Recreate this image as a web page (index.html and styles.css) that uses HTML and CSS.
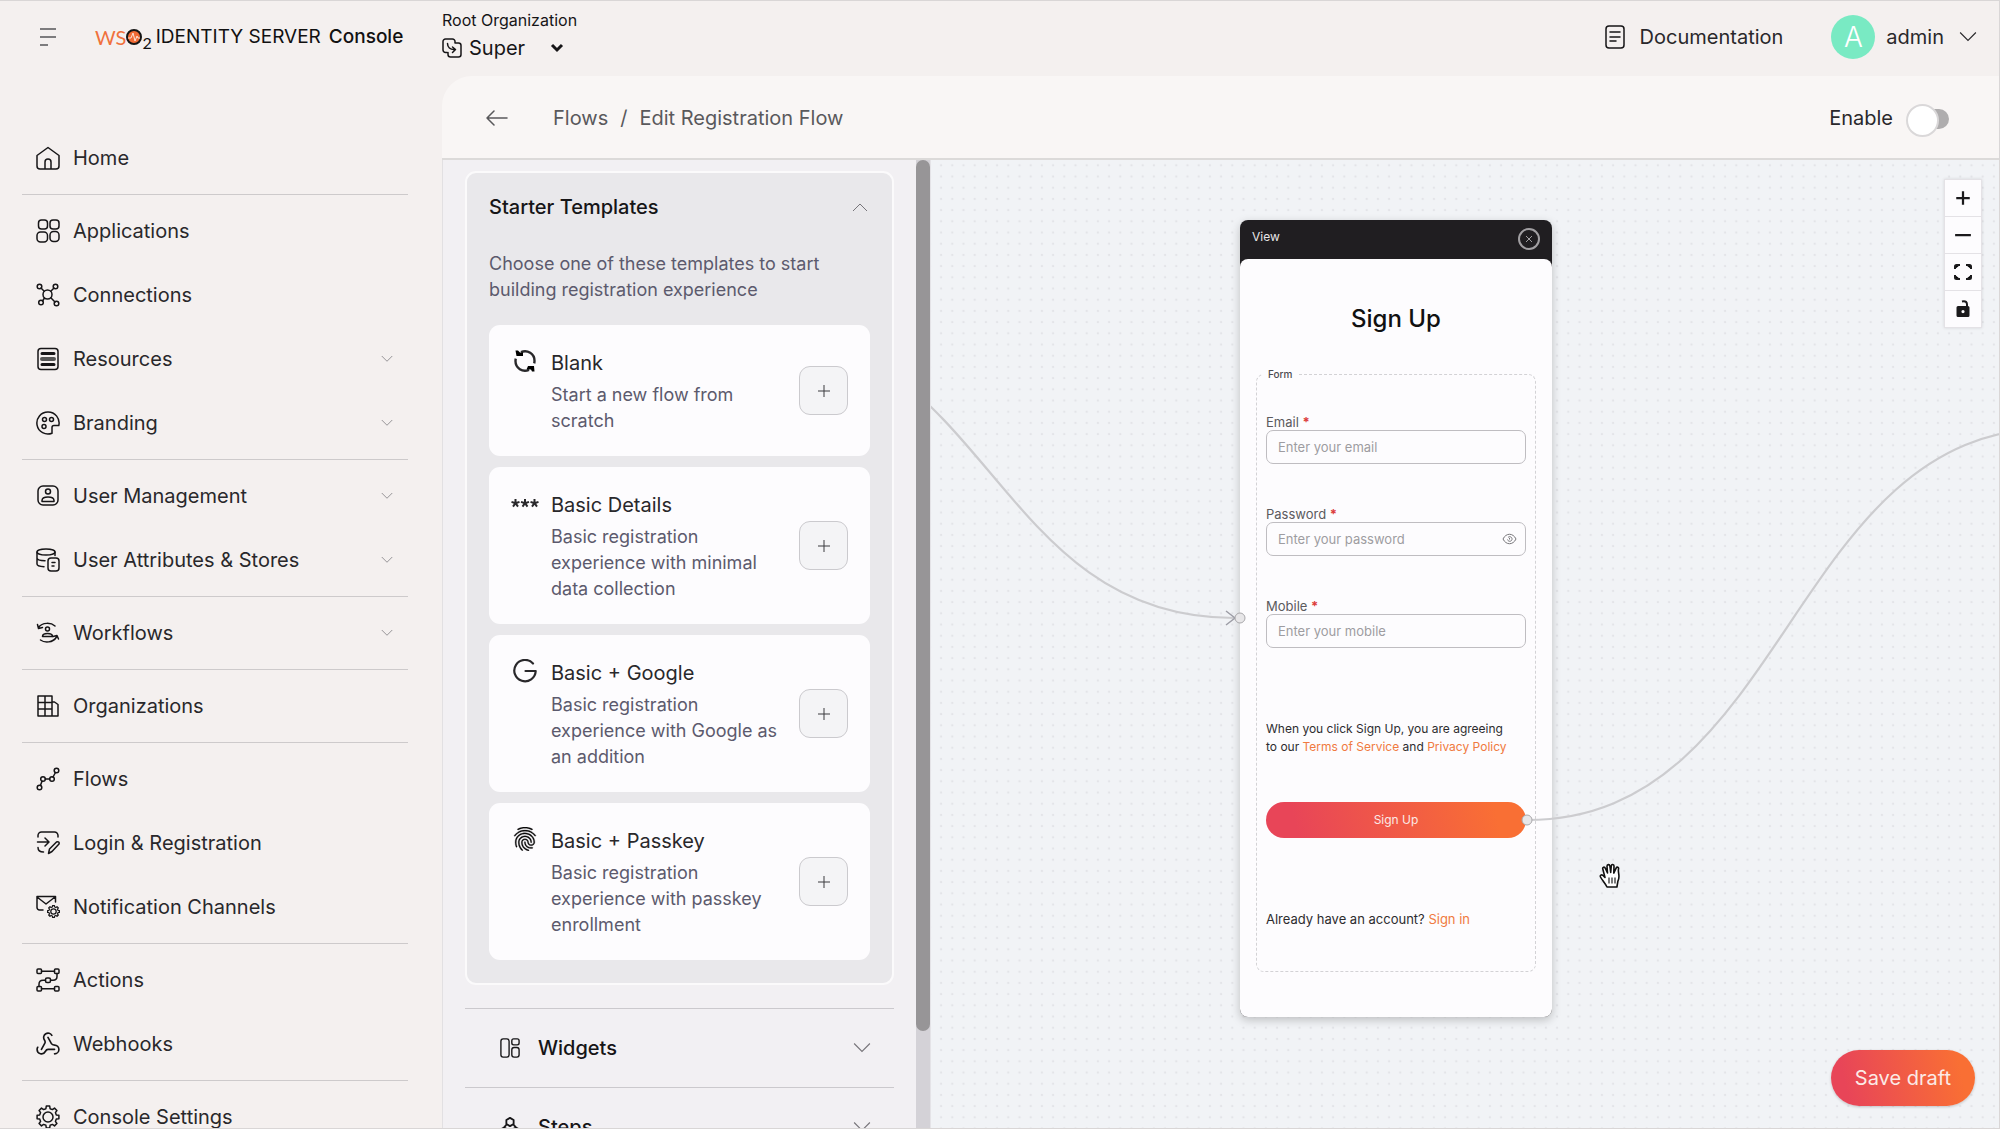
FILE: index.html
```
<!DOCTYPE html>
<html lang="en">
<head>
<meta charset="utf-8">
<meta name="viewport" content="width=device-width, initial-scale=1">
<title>Edit Registration Flow - Console</title>
<link rel="stylesheet" href="styles.css">
</head>
<body>
<svg class="sprite" aria-hidden="true">
  <symbol id="i-chevron" viewBox="0 0 16 16"><path d="M1 4l7 7 7-7"/></symbol>
  <symbol id="i-plus" viewBox="0 0 16 16"><path d="M8 2v12M2 8h12"/></symbol>
  <symbol id="i-gear" viewBox="0 0 24 24"><path d="M22.9 10.3V13.7L20.3 14.1 19.4 16.4 20.9 18.5 18.5 20.9 16.4 19.4 14.1 20.3 13.7 22.9H10.3L9.9 20.3 7.6 19.4 5.5 20.9 3.1 18.5 4.6 16.4 3.7 14.1 1.1 13.7V10.3L3.7 9.9 4.6 7.6 3.1 5.5 5.5 3.1 7.6 4.6 9.9 3.7 10.3 1.1H13.7L14.1 3.7 16.4 4.6 18.5 3.1 20.9 5.5 19.4 7.6 20.3 9.9Z"/><circle cx="12" cy="12" r="5"/></symbol>
</svg>

<header class="topbar">
  <div class="brand">
    <button class="icon-button menu-toggle" aria-label="Toggle menu">
      <svg width="18" height="18" viewBox="0 0 18 18"><path d="M1 1h16M1 9h16M1 17h8"/></svg>
    </button>
    <a class="logo" href="#">
      <span class="logo-ws">WS</span>
      <svg class="logo-o" width="16" height="16" viewBox="0 0 16 16"><circle cx="8" cy="8" r="7" fill="#f26b35" stroke="#151515" stroke-width="2"/><path d="M2 9h3l2-5 2 8 2-5 1 2h2" fill="none" stroke="#fbe3d8"/></svg>
      <span class="logo-two">2</span>
      <span class="logo-product">IDENTITY SERVER</span>
      <span class="logo-app">Console</span>
    </a>
  </div>
  <div class="org">
    <span class="org-label">Root Organization</span>
    <button class="org-switch">
      <svg class="line" width="20" height="20" viewBox="0 0 20 20"><path d="M5 14.500H3.500a2.500 2.500 0 0 1-2.500-2.500V3.500A2.500 2.500 0 0 1 3.500 1h7A2.500 2.500 0 0 1 13 3.500V5h3.500A2.500 2.500 0 0 1 19 7.500v9a2.500 2.500 0 0 1-2.500 2.500h-8A2.500 2.500 0 0 1 6 16.500v-2M5.500 5.500C5.500 9 8 12 13 11.500M10.500 9l3 2.500-3 3"/></svg>
      <span class="org-name">Super</span>
      <svg class="caret" width="14" height="10" viewBox="0 0 14 10"><path d="M2 2l5 5 5-5"/></svg>
    </button>
  </div>
  <div class="account">
    <a class="docs" href="#">
      <svg class="line" width="22" height="24" viewBox="0 0 22 24"><rect x="2" y="1" width="18" height="22" rx="3"/><path d="M6 7h10M6 12h10M6 16h6"/></svg>
      Documentation
    </a>
    <button class="user">
      <span class="avatar">A</span>
      <span>admin</span>
      <svg class="chevron" width="18" height="18"><use href="#i-chevron"/></svg>
    </button>
  </div>
</header>

<div class="shell">
  <nav class="sidebar" aria-label="Main">
    <ul>
      <li><a href="#"><svg class="line" viewBox="0 0 24 24"><path d="M1 9.500 12 1.500l11 8V20a3 3 0 0 1-3 3H4a3 3 0 0 1-3-3ZM9 23v-7a3 3 0 0 1 6 0v7"/></svg><span>Home</span></a></li>
    </ul>
    <ul>
      <li><a href="#"><svg class="line" viewBox="0 0 24 24"><rect x="2.500" y="1" width="9" height="9" rx="3"/><rect x="14" y="1" width="9" height="9" rx="3"/><rect x="1" y="13" width="10.500" height="10" rx="3.500"/><rect x="14" y="12.500" width="9" height="10" rx="3.500"/></svg><span>Applications</span></a></li>
      <li><a href="#"><svg class="line" viewBox="0 0 24 24"><circle cx="11.500" cy="11.500" r="4.500"/><circle cx="3.500" cy="3.500" r="2.300"/><circle cx="19.500" cy="3.500" r="2.300"/><circle cx="5" cy="19.500" r="2.300"/><circle cx="20.500" cy="20.500" r="2.300"/><path d="M5 5l3.200 3.200M18 5l-3.200 3.200M6.500 18l2-3M19 19l-4.200-4.200"/></svg><span>Connections</span></a></li>
      <li><a href="#"><svg class="line" viewBox="0 0 24 24"><rect x="2" y="1.500" width="20" height="21" rx="3"/><path d="M6 6.500h12M6 17.500h12" stroke-width="3"/><path d="M6 12h12" stroke-width="4" stroke="#555"/></svg><span>Resources</span><svg class="chevron" viewBox="0 0 16 16"><use href="#i-chevron"/></svg></a></li>
      <li><a href="#"><svg class="line" viewBox="0 0 24 24"><path d="M12 1a11 11 0 1 0 4 21.200v-5.700a2 2 0 0 1 2-2h4.800A11 11 0 0 0 12 1Z"/><circle cx="8.500" cy="8.500" r="2"/><circle cx="15.500" cy="8.500" r="2"/><circle cx="8" cy="15.500" r="2"/></svg><span>Branding</span><svg class="chevron" viewBox="0 0 16 16"><use href="#i-chevron"/></svg></a></li>
    </ul>
    <ul>
      <li><a href="#"><svg class="line" viewBox="0 0 24 24"><rect x="2" y="2" width="20" height="19" rx="5"/><circle cx="12" cy="7.500" r="2.500"/><path d="M6 17.500v-1c0-2 2.500-3.500 6-3.500s6 1.500 6 3.500v1Z"/></svg><span>User Management</span><svg class="chevron" viewBox="0 0 16 16"><use href="#i-chevron"/></svg></a></li>
      <li><a href="#"><svg class="line" viewBox="0 0 24 24"><ellipse cx="10" cy="4" rx="9" ry="3"/><path d="M1 4v12c0 1.500 3 2.500 7 2.700M19 4v3.500M1 10c0 1.500 3 2.700 8 2.700"/><rect x="12" y="10" width="11" height="13" rx="3"/><path d="M16 14.500h3M16 18h2"/></svg><span>User Attributes &amp; Stores</span><svg class="chevron" viewBox="0 0 16 16"><use href="#i-chevron"/></svg></a></li>
    </ul>
    <ul>
      <li><a href="#"><svg class="line" viewBox="0 0 24 24"><path d="M19 5C15 1.500 6.500 1 2.500 6.500M1.500 3.500l1 4 4-1M4.500 19c4 3 12.500 3 16-3M17 15.500l4-1 1.500 3.500"/><circle cx="11.500" cy="8" r="2"/><path d="M6.500 15.500c0-2 2-3 5-3s5 1 5 3Z"/></svg><span>Workflows</span><svg class="chevron" viewBox="0 0 16 16"><use href="#i-chevron"/></svg></a></li>
    </ul>
    <ul>
      <li><a href="#"><svg class="line" viewBox="0 0 24 24"><path d="M2 2h14v20H2ZM9 2v20M2 8.500h14M2 15h14M16 8h2.500L22 10.500V22h-6"/></svg><span>Organizations</span></a></li>
    </ul>
    <ul>
      <li><a href="#"><svg class="line" viewBox="0 0 24 24"><circle cx="3.500" cy="20.500" r="2.300"/><circle cx="7" cy="12" r="2.300"/><circle cx="16" cy="12" r="2.300"/><circle cx="20.500" cy="3.500" r="2.300"/><path d="M4.500 18.300 6 14.200M9.300 12h4.400M17 10l2.500-4.500"/></svg><span>Flows</span></a></li>
      <li><a href="#"><svg class="line" viewBox="0 0 24 24"><path d="M2 6V4.500A3.500 3.500 0 0 1 5.500 1h13A3.500 3.500 0 0 1 22 4.500V6M2 16.500C2 19.500 4 21 7.500 21M1.500 11h11M9 7l4 4-4 4M12.500 22.500l1-4.500 7-7c2-1 3 .5 2.500 2l-7 7.500Z"/></svg><span>Login &amp; Registration</span></a></li>
      <li><a href="#"><svg class="line" viewBox="0 0 24 24"><path d="M7 15H3.500A2.500 2.500 0 0 1 1 12.500V1.500h18.500V7M1 2l9 7 9-7"/><svg x="11" y="10" width="13" height="13" viewBox="0 0 24 24" stroke-width="2.300"><use href="#i-gear"/></svg></svg><span>Notification Channels</span></a></li>
    </ul>
    <ul>
      <li><a href="#"><svg class="line" viewBox="0 0 24 24"><rect x="1" y="1" width="4.500" height="4.500" rx="1"/><rect x="18.500" y="1" width="4.500" height="4.500" rx="1"/><rect x="9.500" y="10" width="5" height="4.500" rx="1.500"/><rect x="1" y="18.500" width="4.500" height="4.500" rx="1"/><rect x="18.500" y="18.500" width="4.500" height="4.500" rx="1"/><path d="M5.500 3.200h13M21 5.500v3c0 2.500-2 3.700-4 3.700h-2.500M9.500 12.200H7c-2.500 0-4 1.500-4 4v2.300M5.500 20.700h13"/></svg><span>Actions</span></a></li>
      <li><a href="#"><svg class="line" viewBox="1 1 22 22"><path d="M18 16.980h-5.990c-1.100 0-1.950.94-2.480 1.900A4 4 0 0 1 2 17c.01-.7.2-1.400.57-2M6 17l3.130-5.780c.53-.97.1-2.180-.5-3.100a4 4 0 1 1 6.890-4.060M12 6l3.130 5.730C15.660 12.700 16.900 13 18 13a4 4 0 0 1 0 8"/></svg><span>Webhooks</span></a></li>
    </ul>
    <ul>
      <li><a href="#"><svg class="line" viewBox="0 0 24 24"><use href="#i-gear"/></svg><span>Console Settings</span></a></li>
    </ul>
  </nav>

  <main class="workspace">
    <div class="page-header">
      <button class="icon-button back" aria-label="Go back">
        <svg class="line" width="22" height="16" viewBox="0 0 22 16"><path d="M21 8H1M8 1 1 8l7 7"/></svg>
      </button>
      <nav class="crumbs" aria-label="Breadcrumb"><a href="#">Flows</a><span>/</span><span>Edit Registration Flow</span></nav>
      <label class="enable">Enable <input type="checkbox" role="switch"></label>
    </div>

    <div class="builder">
      <aside class="panel">
        <div class="panel-content">
          <section class="templates">
            <button class="section-toggle">Starter Templates <svg class="chevron up" width="16" height="16"><use href="#i-chevron"/></svg></button>
            <p class="intro">Choose one of these templates to start<br>building registration experience</p>
            <ul class="cards">
              <li class="card">
                <svg class="card-icon" viewBox="0 0 24 24"><path d="M8 3.200A9.500 9.500 0 0 1 21.500 12c0 1-.1 1.600-.3 2.400M16 20.800A9.500 9.500 0 0 1 2.500 12c0-1 .1-1.600.3-2.400" fill="none" stroke="currentColor" stroke-width="2.400"/><path d="M2.500 1.500h2.500l2 2h3v3.500H3.500ZM21.500 22.500H19l-1-2h-4.500L15 17h6Z"/></svg>
                <div class="card-text"><h3>Blank</h3><p>Start a new flow from<br>scratch</p></div>
                <button class="add" aria-label="Add Blank"><svg width="16" height="16"><use href="#i-plus"/></svg></button>
              </li>
              <li class="card">
                <svg class="card-icon wide" viewBox="0 0 28 24"><path d="M4.500 12.200V8M4.500 12.200l-4-1.300M4.500 12.200l4-1.300M4.500 12.200 2 15.600M4.500 12.200 7 15.600M14 12.200V8M14 12.200l-4-1.300M14 12.200l4-1.300M14 12.200l-2.500 3.400M14 12.200l2.500 3.400M23.500 12.200V8M23.500 12.200l-4-1.300M23.500 12.200l4-1.300M23.500 12.200 21 15.600M23.500 12.200l2.500 3.400" stroke="currentColor" stroke-width="2"/></svg>
                <div class="card-text"><h3>Basic Details</h3><p>Basic registration<br>experience with minimal<br>data collection</p></div>
                <button class="add" aria-label="Add Basic Details"><svg width="16" height="16"><use href="#i-plus"/></svg></button>
              </li>
              <li class="card">
                <svg class="card-icon" viewBox="0 0 24 24"><path d="M20 4.500A10.700 10.700 0 1 0 22.700 12H12.500" fill="none" stroke="currentColor" stroke-width="2.200" stroke-linecap="round" stroke-linejoin="round"/></svg>
                <div class="card-text"><h3>Basic + Google</h3><p>Basic registration<br>experience with Google as<br>an addition</p></div>
                <button class="add" aria-label="Add Basic + Google"><svg width="16" height="16"><use href="#i-plus"/></svg></button>
              </li>
              <li class="card">
                <svg class="card-icon wide" viewBox="2 2 20 20" stroke="currentColor" stroke-width=".3"><path d="M17.810 4.470c-.08 0-.16-.02-.23-.06C15.660 3.420 14 3 12.010 3c-1.980 0-3.860.47-5.570 1.410-.24.13-.54.04-.68-.2-.13-.24-.04-.55.2-.68C7.820 2.520 9.860 2 12.010 2c2.130 0 3.990.47 6.030 1.520.25.13.34.43.21.67-.09.18-.26.28-.44.28zM3.500 9.720c-.1 0-.2-.03-.29-.09-.23-.16-.28-.47-.12-.7.99-1.400 2.250-2.500 3.750-3.270C9.980 4.040 14 4.030 17.150 5.650c1.500.77 2.760 1.860 3.750 3.250.16.22.11.54-.12.7-.23.16-.54.11-.7-.12-.9-1.260-2.040-2.250-3.390-2.940-2.870-1.470-6.540-1.470-9.400.01-1.360.7-2.500 1.700-3.400 2.960-.08.14-.23.21-.39.21zm6.250 12.070c-.13 0-.26-.05-.35-.15-.87-.87-1.340-1.430-2.010-2.640-.69-1.230-1.050-2.730-1.050-4.340 0-2.970 2.540-5.390 5.660-5.390s5.660 2.420 5.660 5.390c0 .28-.22.5-.5.5s-.5-.22-.5-.5c0-2.420-2.090-4.390-4.660-4.390-2.570 0-4.660 1.970-4.660 4.390 0 1.440.32 2.770.93 3.850.64 1.150 1.080 1.640 1.850 2.420.19.2.19.51 0 .71-.11.1-.24.15-.37.15zm7.170-1.850c-1.190 0-2.240-.3-3.100-.89-1.490-1.010-2.380-2.650-2.380-4.390 0-.28.22-.5.5-.5s.5.22.5.5c0 1.410.72 2.740 1.940 3.560.71.48 1.540.71 2.540.71.24 0 .64-.03 1.040-.1.27-.05.53.13.58.41.05.27-.13.53-.41.58-.57.11-1.070.12-1.210.12zM14.910 22c-.04 0-.09-.01-.13-.02-1.590-.44-2.630-1.030-3.720-2.100-1.400-1.390-2.170-3.240-2.170-5.220 0-1.620 1.380-2.940 3.080-2.940 1.700 0 3.080 1.320 3.080 2.940 0 1.070.93 1.940 2.080 1.940s2.080-.87 2.080-1.940c0-3.770-3.250-6.830-7.250-6.830-2.840 0-5.440 1.580-6.610 4.030-.39.81-.59 1.760-.59 2.800 0 .78.07 2.010.67 3.610.1.26-.03.55-.29.64-.26.1-.55-.04-.64-.29-.49-1.310-.73-2.610-.73-3.960 0-1.200.23-2.290.68-3.240 1.330-2.790 4.280-4.600 7.510-4.600 4.550 0 8.250 3.510 8.250 7.830 0 1.620-1.380 2.940-3.080 2.940s-3.080-1.320-3.080-2.940c0-1.070-.93-1.940-2.080-1.940s-2.080.87-2.080 1.940c0 1.710.66 3.310 1.870 4.510.95.94 1.860 1.460 3.270 1.850.27.07.42.35.35.61-.05.23-.26.38-.47.38z"/></svg>
                <div class="card-text"><h3>Basic + Passkey</h3><p>Basic registration<br>experience with passkey<br>enrollment</p></div>
                <button class="add" aria-label="Add Basic + Passkey"><svg width="16" height="16"><use href="#i-plus"/></svg></button>
              </li>
            </ul>
          </section>
          <button class="section-row">
            <svg class="line" viewBox="0 0 22 22"><rect x="1" y="1" width="9" height="20" rx="2.500"/><rect x="13" y="1" width="8" height="6.500" rx="2"/><rect x="13" y="10.500" width="8" height="10.500" rx="2.500"/></svg>
            Widgets <svg class="chevron" width="18" height="18"><use href="#i-chevron"/></svg>
          </button>
          <button class="section-row">
            <svg class="line bold" viewBox="0 0 22 22"><path d="M11 1l4 2.300v4.400L11 10 7 7.700V3.300ZM7.500 8 4.500 11.500M14.500 8l3 3.500M4.500 11.500l4 2.300v4.400l-4 2.300-4-2.300v-4.400ZM17.500 11.500l4 2.300v4.400l-4 2.300-4-2.300v-4.400Z"/></svg>
            Steps <svg class="chevron" width="18" height="18"><use href="#i-chevron"/></svg>
          </button>
        </div>
        <div class="scrollbar"><div class="thumb"></div></div>
      </aside>

      <div class="canvas">
        <svg class="canvas-layer">
          <defs><pattern id="dots" x="4.500" y="-.3" width="11.200" height="11.200" patternUnits="userSpaceOnUse"><circle cx="5.600" cy="5.600" r="1.200" fill="#e3e4e8"/></pattern></defs>
          <rect width="100%" height="100%" fill="url(#dots)"/>
        </svg>

        <article class="node">
          <header class="node-header">
            <span>View</span>
            <button class="icon-button" aria-label="Remove view"><svg width="22" height="22" viewBox="0 0 22 22"><circle cx="11" cy="11" r="10"/><path d="M8 8l6 6M14 8l-6 6"/></svg></button>
          </header>
          <div class="node-body">
            <h2>Sign Up</h2>
            <fieldset>
              <legend>Form</legend>
              <div class="field"><label for="email">Email <b>*</b></label><input id="email" type="email" placeholder="Enter your email"></div>
              <div class="field">
                <label for="password">Password <b>*</b></label>
                <div class="with-eye">
                  <input id="password" type="password" placeholder="Enter your password">
                  <svg width="15" height="12" viewBox="0 0 15 12"><path d="M1 6C4-.3 11-.3 14 6 11 12.300 4 12.300 1 6ZM6 4.500a2.300 2.300 0 1 1-.5 2M7.500 5v1.500"/></svg>
                </div>
              </div>
              <div class="field"><label for="mobile">Mobile <b>*</b></label><input id="mobile" type="tel" placeholder="Enter your mobile"></div>
              <p class="terms">When you click Sign Up, you are agreeing<br>to our <a href="#">Terms of Service</a> and <a href="#">Privacy Policy</a></p>
              <button class="primary submit" type="button">Sign Up</button>
              <p class="signin">Already have an account? <a href="#">Sign in</a></p>
            </fieldset>
          </div>
        </article>

        <svg class="canvas-layer edges">
          <g fill="none" stroke="#cccccf" stroke-width="2.200">
            <path d="M-182 169C59 169 60 458 303 458"/>
            <path d="M596 660C858 660 858 268 1122 268"/>
            <path d="M295 451l9 7-9 7" stroke="#9d9da6" stroke-width="1.500"/>
          </g>
          <g fill="#e7e6e8" stroke="#a9a8ab"><circle cx="309" cy="458" r="5"/><circle cx="596" cy="660" r="5"/></g>
        </svg>

        <svg class="grab" width="24" height="26" viewBox="0 0 24 26"><path d="M8 24C6 20 3 17 1.500 14c-.8-1.800 1-2.800 2.500-1.500l2 2L3.800 6c-.5-2 1.700-2.700 2.500-.8L8.500 10 8 3.200C8 1.200 10.500 1 10.900 3l.8 6.500.6-6.700c.3-1.800 2.700-1.600 2.700.3l-.2 7 2.300-5c.9-1.700 2.900-.8 2.400 1-.8 4 2 7-.6 12l-1 5.900Z" fill="#fff" stroke="#111" stroke-width="1.600" stroke-linejoin="round"/><path d="M10 14.500v6M13 14.500v6M16 14.500v6" stroke="#222" stroke-width="1.200"/></svg>

        <div class="controls">
          <button aria-label="Zoom in"><svg width="18" height="18"><use href="#i-plus"/></svg></button>
          <button aria-label="Zoom out"><svg width="18" height="18" viewBox="0 0 16 16"><path d="M1 8h14"/></svg></button>
          <button aria-label="Fit view"><svg width="18" height="18" viewBox="0 0 18 18"><path d="M1 6V3.500Q1 2 2.500 2H6M12 2h3.500Q17 2 17 3.500V6M17 12v2.500q0 1.500-1.500 1.500H12M6 16H2.500Q1 16 1 14.500V12"/></svg></button>
          <button aria-label="Toggle interactivity"><svg width="14" height="18" viewBox="0 0 14 18"><path d="M6 1.500c4-1 5 1 5 3V7" fill="none"/><path fill="#1b1a1c" stroke="none" fill-rule="evenodd" d="M2 6h10a1.500 1.500 0 0 1 1.500 1.500v8A1.500 1.500 0 0 1 12 17H2A1.500 1.500 0 0 1 .5 15.500v-8A1.500 1.500 0 0 1 2 6Zm5 4a1.600 1.600 0 1 0 0 3.200A1.600 1.600 0 0 0 7 10Z"/></svg></button>
        </div>
        <button class="primary save">Save draft</button>
      </div>
    </div>
  </main>
</div>
</body>
</html>
```
FILE: styles.css
```
* { box-sizing: border-box; }

body {
  margin: 0;
  height: 100vh;
  display: flex;
  flex-direction: column;
  overflow: hidden;
  border: 1px solid #d9d6d6;
  border-left: 0;
  background: #f4f0ef;
  color: #29282b;
  font: 20px/28px Inter, "Liberation Sans", sans-serif;
}

h2, h3, p, ul, fieldset { margin: 0; padding: 0; }
ul { list-style: none; }
a { color: inherit; text-decoration: none; }
button { padding: 0; border: 0; background: none; color: inherit; font: inherit; cursor: pointer; }
svg { flex: none; }

.sprite { position: absolute; width: 0; height: 0; }
.line { fill: none; stroke: #161517; stroke-width: 1.5px; stroke-linejoin: round; stroke-linecap: round; }
.bold { stroke-width: 2px; }
.chevron { fill: none; stroke: #77757a; }
.up { transform: rotate(180deg); }
.icon-button { display: flex; }

/* Top bar */
.topbar { display: flex; flex: none; height: 75px; }
.brand { display: flex; width: 442px; height: 72px; padding-left: 39px; align-items: center; }
.menu-toggle svg { stroke: #55565a; stroke-width: 1.5px; }
.logo { display: flex; align-items: center; margin-left: 38px; color: #111; }
.logo-ws { color: #f0713c; font: 400 20px/28px Lato, sans-serif; }
.logo-two { align-self: flex-end; font: 400 16px/16px Lato, sans-serif; }
.logo-product { margin-left: 4px; font-size: 19px; }
.logo-app { margin-left: 8px; font-size: 19px; font-weight: 500; }
.org { display: flex; flex-direction: column; padding-top: 9px; color: #161517; }
.org-label { font-size: 16px; line-height: 20px; }
.org-switch { display: flex; align-items: center; gap: 7px; margin-top: 4px; }
.caret { margin-left: 18px; fill: none; stroke: #161517; stroke-width: 3px; }
.account { display: flex; align-items: center; gap: 48px; height: 72px; margin-left: auto; padding-right: 22px; }
.docs { display: flex; align-items: center; gap: 14px; }
.user { display: flex; align-items: center; gap: 11px; }
.user .chevron { margin-left: 4px; stroke: #29282b; }
.avatar { width: 44px; height: 44px; border-radius: 50%; background: #79eac3; color: #fff; font-size: 28px; font-weight: 300; line-height: 44px; text-align: center; }

/* Sidebar */
.shell { display: flex; flex: 1; min-height: 0; }
.sidebar { width: 442px; flex: none; padding: 50px 34px 0 22px; overflow: hidden; }
.sidebar ul + ul { margin-top: 4px; padding-top: 4px; border-top: 1px solid #cdcacb; }
.sidebar a { display: flex; align-items: center; gap: 13px; height: 64px; padding: 0 15px 0 14px; }
.sidebar .line { width: 24px; height: 24px; }
.sidebar .chevron { width: 12px; height: 12px; margin-left: auto; }

/* Workspace */
.workspace { display: flex; flex: 1; flex-direction: column; min-width: 0; overflow: hidden; border-top-left-radius: 30px; background: #f9f6f5; }
.page-header { display: flex; align-items: center; flex: none; height: 84px; padding: 2px 50px 0 44px; border-bottom: 2px solid #dcdad9; }
.back .line { stroke: #59585b; }
.crumbs { display: flex; gap: 12px; margin-left: 45px; color: #5a595c; }
.enable { display: flex; align-items: center; gap: 14px; margin-left: auto; }
.enable input { appearance: none; position: relative; width: 42px; height: 20px; margin: 2px 0 0; border-radius: 10px; background: #afadae; }
.enable input::before { content: ""; position: absolute; top: -5px; left: -1px; width: 29px; height: 29px; border: 2px solid #dad8d9; border-radius: 50%; background: #fff; }
.enable input:checked::before { left: 14px; }

.builder { display: flex; flex: 1; min-height: 0; }

/* Element panel */
.panel { display: flex; flex: none; width: 489px; overflow: hidden; border-left: 1px solid #e2e0e2; background: #f2f0f3; }
.panel-content { flex: 1; padding: 11px 22px 0; }
.scrollbar { width: 15px; border-right: 1px solid #e4e3e7; background: #d4d2d7; }
.thumb { height: 90%; border-radius: 7px; background: #979597; }
.templates { padding: 0 22px 23px; border: 2px solid #fbfafb; border-radius: 11px; background: #e9e8eb; }
.section-toggle { display: flex; align-items: center; justify-content: space-between; width: 100%; height: 68px; padding-right: 2px; color: #161517; font-weight: 500; }
.intro { margin: 10px 0 22px; color: #5c5a6d; font-size: 18px; line-height: 26px; }
.cards { display: flex; flex-direction: column; gap: 11px; }
.card { display: flex; align-items: flex-start; padding: 22px; border-radius: 11px; background: #fdfcfe; }
.card-icon { width: 24px; height: 24px; margin: 2px 14px 0 2px; }
.card-icon.wide { width: 28px; margin: 2px 12px 0 0; }
.card-text { flex: 1; min-width: 0; }
.card-text h3 { height: 35px; padding-top: 2px; font-size: 20px; font-weight: 400; }
.card-text p { color: #5c5a6d; font-size: 18px; line-height: 26px; white-space: nowrap; }
.add { display: flex; align-items: center; justify-content: center; align-self: center; flex: none; width: 49px; height: 49px; border: 1px solid #cbcace; border-radius: 11px; background: #f4f4f6; }
.add svg { stroke: #3b3b3e; }
.section-row { display: flex; align-items: center; gap: 18px; width: 100%; height: 79px; padding: 0 23px 0 35px; border-top: 1px solid #cbc9cd; color: #161517; font-weight: 500; }
.templates + .section-row { margin-top: 23px; }
.section-row .line { width: 20px; height: 20px; }
.section-row .chevron { margin-left: auto; }

/* Flow canvas */
.canvas { position: relative; flex: 1; min-width: 0; overflow: hidden; background: #f1f3f6; }
.canvas-layer { position: absolute; inset: 0; width: 100%; height: 100%; }
.edges { pointer-events: none; }
.node { position: absolute; top: 60px; left: 309px; width: 312px; border-radius: 8px; background: #201e21; box-shadow: 0 3px 10px rgb(0 0 0 / 22%); font-size: 12px; }
.node-header { display: flex; justify-content: space-between; height: 39px; padding: 8px 12px; color: #e8e6e8; font-size: 12px; line-height: 18px; }
.node-header svg { fill: none; stroke: #a19fa2; }
.node-header circle { stroke-width: 2px; }
.node-body { padding: 44px 16px 45px; border-radius: 8px; background: #fdfcfe; }
.node h2 { margin-bottom: 33px; color: #111; font-size: 24px; font-weight: 500; line-height: 32px; text-align: center; }
fieldset { min-width: 0; padding: 34px 9px 43px; border: 1px dashed #d3d2d5; border-radius: 8px; }
legend { margin-left: -4px; padding: 0 6px; color: #4c4b4e; font-size: 10px; line-height: 12px; font-weight: 500; }
.field { margin-bottom: 42px; font-size: 13px; }
.field label { display: block; color: #5b5a5d; line-height: 16px; }
.field b { color: #dc3c3c; }
.field input { display: block; width: 100%; height: 34px; padding: 0 11px; border: 1px solid #bfbdc1; border-radius: 7px; background: none; font: inherit; }
.field input::placeholder { color: #9e9ca1; opacity: 1; }
.with-eye { position: relative; }
.with-eye svg { position: absolute; top: 11px; right: 9px; fill: none; stroke: #77767a; }
.terms, .signin { color: #2d2c2f; line-height: 18px; white-space: nowrap; }
.terms { margin: 72px 0 46px; }
.signin { font-size: 13px; }
.terms a, .signin a { color: #f07a40; }
.primary { background: linear-gradient(77deg, #e84558 12%, #f96f34 88%); color: #fbeae6; }
.submit { display: block; width: 100%; height: 36px; margin-bottom: 72px; border-radius: 18px; line-height: 18px; }
.grab { position: absolute; top: 703px; left: 668px; }
.controls { position: absolute; top: 19px; right: 17px; display: grid; gap: 1px; border: 1px solid #e4e2e6; background: #e4e2e6; box-shadow: 0 0 3px rgb(0 0 0 / 12%); }
.controls button { display: flex; align-items: center; justify-content: center; width: 36px; height: 36px; background: #fdfcfe; }
.controls svg { stroke: #1b1a1c; stroke-width: 2px; }
.save { position: absolute; right: 24px; bottom: 22px; height: 56px; padding: 0 24px; border-radius: 28px; box-shadow: 0 1px 3px rgb(0 0 0 / 20%); }
```
